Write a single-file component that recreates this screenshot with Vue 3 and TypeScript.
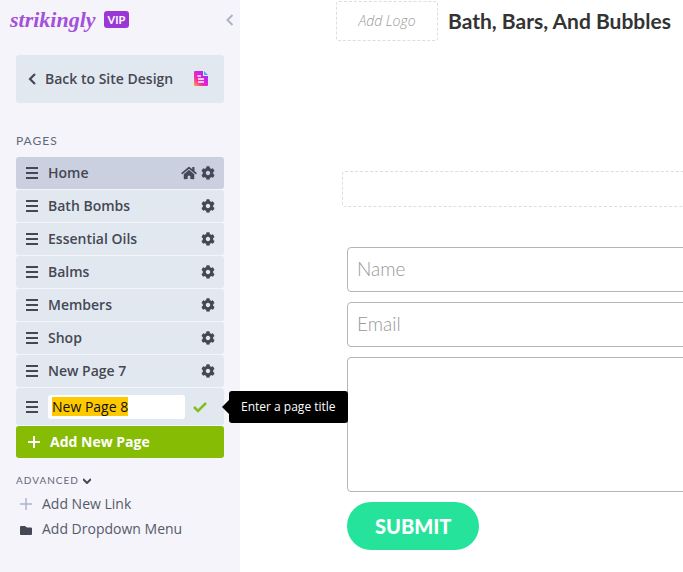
<script setup lang="ts">
import { nextTick, onMounted, ref } from 'vue'

interface Page {
  title: string
  home?: boolean
}

const pages: Page[] = [
  { title: 'Home', home: true },
  { title: 'Bath Bombs' },
  { title: 'Essential Oils' },
  { title: 'Balms' },
  { title: 'Members' },
  { title: 'Shop' },
  { title: 'New Page 7' },
]

const draftTitle = ref('New Page 8')
const titleInput = ref<HTMLInputElement | null>(null)

onMounted(async () => {
  await nextTick()
  titleInput.value?.focus()
  titleInput.value?.select()
})
</script>

<template>
  <div class="editor">
    <aside class="sidebar">
      <header class="brand">
        <span class="wordmark">strikingly</span>
        <span class="vip">VIP</span>
        <button class="collapse" type="button" aria-label="Collapse sidebar">
          <svg width="8" height="12" viewBox="0 0 8 12"><path d="M6.5 1 1.5 6l5 5" fill="none" stroke="#acb5c8" stroke-width="2" /></svg>
        </button>
      </header>

      <button class="back" type="button">
        <svg width="8" height="12" viewBox="0 0 8 12"><path d="M7 1 2 6l5 5" fill="none" stroke="#454854" stroke-width="2.2" /></svg>
        <span class="back-label">Back to Site Design</span>
        <svg width="16" height="16" viewBox="0 0 16 16">
          <defs>
            <linearGradient id="doc" x1="0" y1="1" x2="1" y2="0">
              <stop offset="0" stop-color="#ffae35" />
              <stop offset="0.3" stop-color="#f630a5" />
              <stop offset="0.6" stop-color="#d51fe5" />
              <stop offset="1" stop-color="#7040ff" />
            </linearGradient>
          </defs>
          <path d="M2 0h8v5h5v9q0 1-1 1H2q-1 0-1-1V1q0-1 1-1z" fill="url(#doc)" />
          <path d="M11 0v4h4z" fill="#55a9f5" />
          <path d="M4.500 5h3.500M5 8h6M5 11h6" stroke="#fff" stroke-width="1.5" />
        </svg>
      </button>

      <h2 class="caption">PAGES</h2>
      <ul class="pages">
        <li v-for="page in pages" :key="page.title" class="row" :class="{ active: page.home }">
          <svg class="grip" width="12" height="12" viewBox="0 0 12 12"><path d="M0 1h12M0 6h12M0 11h12" stroke="#454854" stroke-width="2" /></svg>
          <span class="title">{{ page.title }}</span>
          <svg v-if="page.home" width="16" height="14" viewBox="0 0 576 512">
            <path fill="#454854" d="M280.37 148.26L96 300.11V464a16 16 0 0 0 16 16l112.06-.29a16 16 0 0 0 15.92-16V368a16 16 0 0 1 16-16h64a16 16 0 0 1 16 16v95.64a16 16 0 0 0 16 16.05L464 480a16 16 0 0 0 16-16V300L295.67 148.26a12.19 12.19 0 0 0-15.3 0zM571.6 251.47L488 182.56V44.05a12 12 0 0 0-12-12h-56a12 12 0 0 0-12 12v72.61L318.47 43a48 48 0 0 0-61 0L4.34 251.47a12 12 0 0 0-1.6 16.9l25.5 31A12 12 0 0 0 45.15 301l235.22-193.74a12.19 12.19 0 0 1 15.3 0L530.9 301a12 12 0 0 0 16.9-1.6l25.5-31a12 12 0 0 0-1.7-16.93z" />
          </svg>
          <button type="button" class="icon-button" :aria-label="`Settings for ${page.title}`">
            <svg width="14" height="14" viewBox="0 0 512 512">
              <path fill="#454854" d="M487.4 315.7l-42.6-24.6c4.3-23.2 4.3-47 0-70.2l42.6-24.6c4.9-2.8 7.1-8.6 5.5-14-11.1-35.6-30-67.8-54.7-94.6-3.8-4.1-10-5.1-14.8-2.3L380.8 110c-17.9-15.4-38.5-27.3-60.8-35.1V25.8c0-5.6-3.9-10.5-9.4-11.7-36.7-8.2-74.3-7.8-109.2 0-5.5 1.2-9.4 6.1-9.4 11.7V75c-22.2 7.9-42.8 19.8-60.8 35.1L88.7 85.5c-4.9-2.8-11-1.9-14.8 2.3-24.7 26.7-43.6 58.9-54.7 94.6-1.7 5.4.6 11.2 5.5 14L67.3 221c-4.3 23.2-4.3 47 0 70.2l-42.6 24.6c-4.9 2.8-7.1 8.6-5.5 14 11.1 35.6 30 67.8 54.7 94.6 3.8 4.1 10 5.1 14.8 2.3l42.6-24.6c17.9 15.4 38.5 27.3 60.8 35.1v49.2c0 5.6 3.9 10.5 9.4 11.7 36.7 8.2 74.3 7.8 109.2 0 5.5-1.2 9.4-6.1 9.4-11.7v-49.2c22.2-7.9 42.8-19.8 60.8-35.1l42.6 24.6c4.9 2.8 11 1.9 14.8-2.3 24.7-26.7 43.6-58.9 54.7-94.6 1.5-5.5-.7-11.3-5.6-14.1zM256 336c-44.1 0-80-35.9-80-80s35.9-80 80-80 80 35.9 80 80-35.9 80-80 80z" />
            </svg>
          </button>
        </li>
        <li class="row editing">
          <svg class="grip" width="12" height="12" viewBox="0 0 12 12"><path d="M0 1h12M0 6h12M0 11h12" stroke="#454854" stroke-width="2" /></svg>
          <input ref="titleInput" v-model="draftTitle" class="title-input" type="text" aria-label="Page title" spellcheck="false" />
          <button type="button" class="icon-button confirm" aria-label="Save page title">
            <svg width="14" height="12" viewBox="0 0 14 12"><path d="m1 6 4 4 8-8" fill="none" stroke="#85bd22" stroke-width="2.5" /></svg>
          </button>
          <span class="tooltip" role="tooltip">Enter a page title</span>
        </li>
      </ul>
      <button class="add-page" type="button">
        <svg width="12" height="12" viewBox="0 0 12 12"><path d="M6 0v12M0 6h12" stroke="#fff" stroke-width="2" /></svg>
        Add New Page
      </button>

      <button class="advanced" type="button">
        ADVANCED
        <svg width="8" height="6" viewBox="0 0 8 6"><path d="m0 1 4 4 4-4" fill="none" stroke="#454854" stroke-width="2" /></svg>
      </button>
      <button class="extra" type="button">
        <svg width="12" height="12" viewBox="0 0 12 12"><path d="M6 0v12M0 6h12" stroke="#acb5c8" stroke-width="1.5" /></svg>
        Add New Link
      </button>
      <button class="extra" type="button">
        <svg width="12" height="12" viewBox="0 0 12 12"><path d="M1 3h4l2 1.500h4q1 0 1 1V11q0 1-1 1H1q-1 0-1-1V4q0-1 1-1z" fill="#454854" /></svg>
        Add Dropdown Menu
      </button>
    </aside>

    <main class="site">
      <header class="site-header">
        <button class="logo-slot" type="button">Add Logo</button>
        <h1>Bath, Bars, And Bubbles</h1>
      </header>
      <div class="drop-slot"></div>
      <form class="contact" @submit.prevent>
        <input type="text" placeholder="Name" aria-label="Name" />
        <input type="email" placeholder="Email" aria-label="Email" />
        <textarea aria-label="Message"></textarea>
        <button class="submit" type="submit">SUBMIT</button>
      </form>
    </main>
  </div>
</template>

<style>
body {
  margin: 0;
  background: #fff;
}
</style>

<style scoped>
* {
  box-sizing: border-box;
}
button,
input,
textarea {
  font: inherit;
  margin: 0;
}
button {
  border: 0;
  padding: 0;
  background: none;
  color: inherit;
  text-align: left;
  cursor: pointer;
}
svg {
  display: block;
  flex: none;
}
.editor {
  display: flex;
  min-height: 100vh;
  font: 14px/20px 'Open Sans', sans-serif;
  color: #454854;
}
.sidebar {
  flex: none;
  width: 240px;
  padding: 0 16px;
  display: flex;
  flex-direction: column;
  background: #f5f4fa;
  position: relative;
  z-index: 1;
}
.brand {
  display: flex;
  align-items: center;
  gap: 8px;
  height: 39px;
  margin: 0 -10px 16px -6px;
}
.wordmark {
  font: italic 700 22px/38px 'Liberation Serif', serif;
  color: #a450da;
}
.vip {
  padding: 0 4px;
  border-radius: 3px;
  background: #9b37d6;
  color: #fff;
  font: 700 11px/17px Lato, sans-serif;
}
.collapse {
  margin-left: auto;
}
.back {
  display: flex;
  align-items: center;
  gap: 9px;
  height: 48px;
  padding: 0 15px 0 12px;
  border-radius: 3px;
  background: #e2e8f0;
  font-weight: 600;
}
.back-label {
  flex: 1;
}
.caption {
  margin: 28px 0 6px;
  font: 400 12px/20px Lato, sans-serif;
  letter-spacing: 1px;
  color: #636878;
}
.pages {
  display: flex;
  flex-direction: column;
  gap: 1px;
  margin: 0 0 1px;
  padding: 0;
  list-style: none;
}
.row {
  position: relative;
  display: flex;
  align-items: center;
  gap: 4px;
  height: 32px;
  padding: 0 9px 0 10px;
  border-radius: 3px;
  background: #e2e8f0;
  font-weight: 600;
}
.row.active {
  background: #cad0df;
}
.title {
  flex: 1;
  padding-left: 6px;
}
.editing {
  height: 37px;
}
.title-input {
  flex: 1;
  min-width: 0;
  height: 24px;
  margin-left: 6px;
  padding: 0 4px;
  border: 0;
  border-radius: 3px;
  outline: 0;
  background: #fff;
  color: #111;
  font-weight: 400;
}
.title-input::selection {
  background: #ffc900;
  color: #111;
}
.confirm {
  padding: 0 8px 0 4px;
}
.tooltip {
  position: absolute;
  left: calc(100% + 5px);
  top: 3px;
  padding: 0 12px;
  border-radius: 3px;
  background: #000;
  color: #fff;
  font-size: 12px;
  font-weight: 400;
  line-height: 32px;
  white-space: nowrap;
}
.tooltip::before {
  content: '';
  position: absolute;
  left: -7px;
  top: 9px;
  border: solid transparent;
  border-width: 7px 7px 7px 0;
  border-right-color: #000;
}
.add-page {
  display: flex;
  align-items: center;
  gap: 10px;
  height: 32px;
  padding: 0 12px;
  border-radius: 3px;
  background: #86bc04;
  color: #fff;
  font-weight: 700;
}
.advanced {
  display: flex;
  align-items: baseline;
  gap: 4px;
  margin: 12px 0 1px;
  font: 400 10px/20px Lato, sans-serif;
  letter-spacing: 1px;
  color: #636878;
}
.extra {
  display: flex;
  align-items: center;
  gap: 10px;
  padding-left: 4px;
  line-height: 25px;
  color: #555a69;
}
.site {
  flex: 1;
  min-width: 0;
  overflow: hidden;
  padding: 1px 0 22px 96px;
}
.site-header {
  display: flex;
  align-items: center;
  gap: 10px;
}
.logo-slot {
  flex: none;
  width: 102px;
  height: 40px;
  border: 1px dashed #ddd;
  border-radius: 3px;
  color: #999;
  font-style: italic;
  font-weight: 300;
  text-align: center;
}
h1 {
  margin: 0;
  font: 700 21px/40px Lato, sans-serif;
  color: #333;
  white-space: nowrap;
}
.drop-slot {
  height: 36px;
  margin: 130px -12px 40px 6px;
  border: 1px dashed #ddd;
  border-radius: 3px;
}
.contact {
  display: flex;
  flex-direction: column;
  gap: 10px;
  margin: 0 -12px 0 11px;
}
.contact input,
.contact textarea {
  width: 100%;
  height: 45px;
  padding: 0 9px 2px;
  border: 1px solid #b5b5b5;
  border-radius: 4px;
  background: #fff;
  font: 300 19px/24px Lato, sans-serif;
  color: #333;
}
.contact textarea {
  height: 135px;
  padding: 9px;
  resize: none;
}
.contact input::placeholder {
  color: #999;
  opacity: 1;
}
.submit {
  align-self: flex-start;
  padding: 0 28px;
  border-radius: 24px;
  background: #26e39b;
  color: #fff;
  font: 900 20px/48px Lato, sans-serif;
}
</style>
